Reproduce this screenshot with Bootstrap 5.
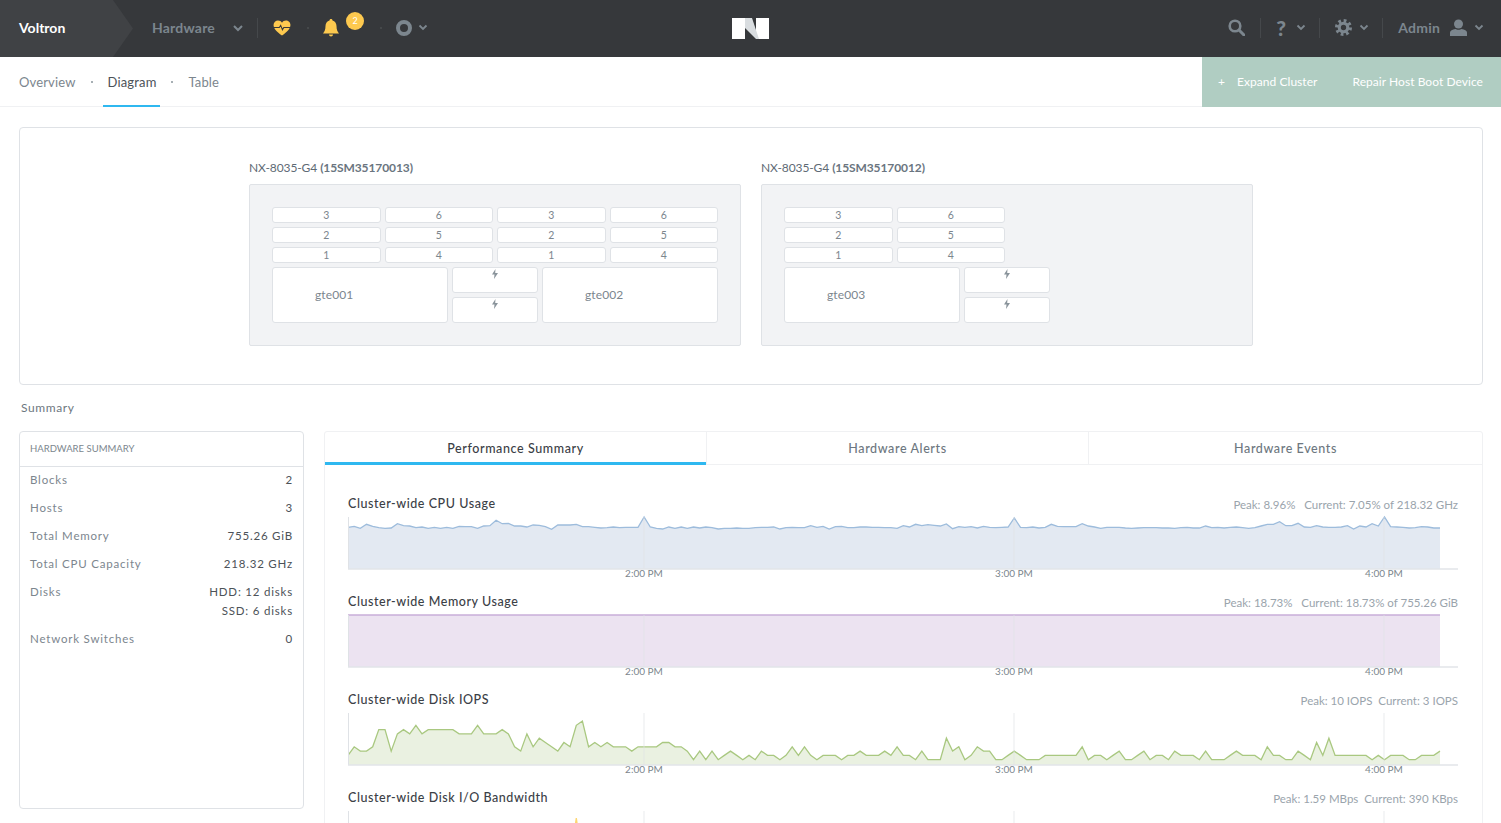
<!DOCTYPE html>
<html lang="en">
<head>
    <meta charset="UTF-8">
    <meta name="viewport" content="width=device-width, initial-scale=1.0">
    <title>Voltron Hardware</title>
    <link href="https://cdn.jsdelivr.net/npm/bootstrap@5.3.2/dist/css/bootstrap.min.css" rel="stylesheet">
    <style>
        html, body { height: 100%; overflow: hidden; }
        body { font-family: Lato, "Liberation Sans", sans-serif; color: #4c5258; background: #fff; }
        .top-hdr { height: 57px; padding-bottom: 2px; background: #36383b; display: grid; grid-template-columns: 1fr auto 1fr; align-items: center; }
        .brand-arrow { width: 133px; height: 57px; margin-bottom: -2px; background: #404245; clip-path: polygon(0 0, 113px 0, 133px 50%, 113px 100%, 0 100%); padding-left: 19px; line-height: 55px; color: #fff; font-size: 14px; font-weight: 700; }
        .hdr-txt { color: #7c868e; font-size: 14px; font-weight: 700; letter-spacing: .2px; }
        .hdr-sep { width: 1px; height: 20px; background: #45484b; }
        .hdr-dot { width: 2px; height: 2px; background: #4b4e51; border-radius: 50%; }
        .alert-dot { position: absolute; left: 23px; top: -7px; width: 18px; height: 18px; border-radius: 50%; background: #fdc94f; color: #fff; font-size: 9px; line-height: 18px; text-align: center; }
        .help-mark { color: #7c868e; font-size: 21px; font-weight: 900; line-height: 1; width: 10px; }
        .sub-nav { height: 50px; border-bottom: 1px solid #f0f1f3; }
        .sub-link { font-size: 13px; letter-spacing: .15px; color: #7c868e; height: 50px; line-height: 50px; position: relative; }
        .sub-link.on { color: #4c5258; }
        .sub-link.on::after { content: ""; position: absolute; left: -5px; right: -4px; bottom: 0; height: 2px; background: #2fb8f0; }
        .sub-dot { width: 2px; height: 2px; border-radius: 50%; background: #8a949b; margin: 0 15px; }
        .act-box { width: 299px; height: 50px; background: #b0cdc2; color: #fff; font-size: 12px; letter-spacing: .05px; line-height: 49px; white-space: nowrap; flex-shrink: 0; }
        .act-plus { margin-left: 16px; width: 19px; flex-shrink: 0; }
        .rack-card { margin: 20px 18px 0 19px; height: 258px; border: 1px solid #dfe2e6; border-radius: 4px; padding-top: 30px; gap: 20px; }
        .rack-title { font-size: 12px; letter-spacing: -.1px; color: #5e6a75; height: 26px; line-height: 19px; }
        .rack-title b { font-weight: 700; color: #6a7580; }
        .rack-box { width: 492px; height: 162px; background: #f2f3f5; border: 1px solid #dfe2e6; border-radius: 2px; padding: 22px; }
        .drive-grid { display: grid; grid-template-columns: repeat(4, 1fr); gap: 4px; }
        .drive-grid.half { grid-template-columns: repeat(2, 1fr); width: 221px; }
        .drive-slot, .host-slot, .psu-slot { background: #fff; border: 1px solid #dfe2e6; border-radius: 3px; color: #7c868e; }
        .drive-slot { height: 16px; font-size: 10.5px; line-height: 15px; text-align: center; }
        .host-slot { width: 176px; height: 56px; font-size: 12px; line-height: 53px; padding-left: 42px; letter-spacing: .1px; }
        .psu-slot { width: 86px; height: 26px; }
        .psu-slot svg { display: block; margin: 1px auto 0; }
        .sum-label { margin: 16px 0 0 21px; height: 30px; font-size: 12px; letter-spacing: .6px; color: #6d7780; line-height: 14px; }
        .sum-row { margin: 0 18px 0 19px; gap: 20px; }
        .hw-card { width: 285px; height: 378px; border: 1px solid #dfe2e6; border-radius: 4px; flex-shrink: 0; }
        .hw-head { height: 35px; border-bottom: 1px solid #dfe2e6; padding-left: 10px; font-size: 9.5px; color: #7c868e; line-height: 34px; }
        .hw-row { padding: 0 10px; height: 28px; line-height: 26px; font-size: 11.5px; letter-spacing: .8px; color: #7c868e; }
        .hw-row.tall { height: 47px; }
        .hw-row span:last-child { color: #4c5258; text-align: right; }
        .hw-row.tall span:last-child { line-height: 19px; padding-top: 3px; }
        .perf-panel { flex: 1; border: 1px solid #f0f1f3; border-radius: 3px; height: 500px; }
        .perf-tab { height: 33px; line-height: 33px; text-align: center; font-size: 12.5px; letter-spacing: .6px; color: #6d7780; border-bottom: 1px solid #f0f1f3; font-weight: 500; }
        .perf-tab + .perf-tab { border-left: 1px solid #f0f1f3; }
        .perf-tab.on { color: #3b4046; border-bottom: 3px solid #2fb8f0; }
        .chart-wrap { padding: 28px 24px 0 23px; }
        .chart-item { height: 98px; }
        .chart-head { height: 20px; }
        .chart-name { font-size: 12.5px; font-weight: 500; letter-spacing: .55px; color: #3b4046; line-height: 22px; }
        .chart-peak { font-size: 11.5px; color: #9aa4ac; line-height: 24px; }
        .chart-svg { display: block; width: 1110px; height: 68px; }
        .chart-svg text { font-family: Lato, "Liberation Sans", sans-serif; font-size: 10px; fill: #7c868e; text-anchor: middle; }
    </style>
</head>
<body>
    <div class="top-hdr">
        <div class="d-flex align-items-center">
            <div class="brand-arrow">Voltron</div>
            <span class="hdr-txt" style="margin-left:19px">Hardware</span>
            <svg style="margin:0 13px 0 17px" width="12" height="8" viewBox="0 0 12 8"><path d="M2 2l4 4 4-4" fill="none" stroke="#7c868e" stroke-width="2"/></svg>
            <div class="hdr-sep" style="margin-right:15px"></div>
            <svg width="18" height="16" viewBox="0 0 20 18"><path d="M10 17.500C4 13 .5 9.500.5 5.500.5 2.500 3 .5 5.500.5c2 0 3.500 1 4.500 2.500C11 1.500 12.500.5 14.500.5c2.500 0 5 2 5 5 0 4-3.500 7.500-9.500 12z" fill="#fdc94f"/><path d="M1 8.500h6l1.500-2.500 2 5 1.500-2.500h7" fill="none" stroke="#36383b" stroke-width="1.200"/></svg>
            <div class="hdr-dot" style="margin:0 14px 0 16px"></div>
            <div class="position-relative">
                <svg class="d-block" width="16" height="18" viewBox="0 0 16 18"><path d="M8 0c1 0 1.500.7 1.500 1.500C12 2.200 13.500 4.500 13.500 7c0 4 1 5.500 2.500 7.500H0C1.500 12.500 2.500 11 2.500 7c0-2.500 1.500-4.800 4-5.500C6.500.7 7 0 8 0zM6 15.500h4c0 1.200-1 2-2 2s-2-.8-2-2z" fill="#fdc94f"/></svg>
                <span class="alert-dot">2</span>
            </div>
            <div class="hdr-dot" style="margin:0 14px 0 41px"></div>
            <svg width="16" height="16" viewBox="0 0 16 16"><circle cx="8" cy="8" r="6" fill="none" stroke="#7c868e" stroke-width="4"/></svg>
            <svg style="margin-left:6px" width="10" height="7" viewBox="0 0 10 7"><path d="M1.500 1.500l3.500 3.500 3.500-3.500" fill="none" stroke="#7c868e" stroke-width="1.800"/></svg>
        </div>
        <svg width="37" height="22" viewBox="0 0 37 22"><path d="M0 1h13v21H0zM24 1h13v21H24z" fill="#fff"/><path d="M13 1h7l7 21h-3L13 11z" fill="#d9dde0"/></svg>
        <div class="d-flex align-items-center justify-content-end">
            <svg width="17" height="17" viewBox="0 0 17 17"><circle cx="7" cy="7" r="5.300" fill="none" stroke="#7c868e" stroke-width="2.600"/><path d="M11 11l5 5" stroke="#7c868e" stroke-width="3" stroke-linecap="round"/></svg>
            <div class="hdr-sep" style="margin:0 15px"></div>
            <span class="help-mark">?</span>
            <svg style="margin-left:10px" width="10" height="7" viewBox="0 0 10 7"><path d="M1.500 1.500l3.500 3.500 3.500-3.500" fill="none" stroke="#7c868e" stroke-width="1.800"/></svg>
            <div class="hdr-sep" style="margin:0 15px 0 13px"></div>
            <svg width="17" height="17" viewBox="0 0 16 16"><circle cx="8" cy="8" r="6.500" fill="none" stroke="#7c868e" stroke-width="3" stroke-dasharray="2.550 2.550"/><circle cx="8" cy="8" r="4" fill="none" stroke="#7c868e" stroke-width="3"/></svg>
            <svg style="margin-left:7px" width="10" height="7" viewBox="0 0 10 7"><path d="M1.500 1.500l3.500 3.500 3.500-3.500" fill="none" stroke="#7c868e" stroke-width="1.800"/></svg>
            <div class="hdr-sep" style="margin:0 15px 0 13px"></div>
            <span class="hdr-txt">Admin</span>
            <svg style="margin-left:10px" width="17" height="17" viewBox="0 0 17 17"><circle cx="8.500" cy="5" r="4.500" fill="#7c868e"/><path d="M0 17v-3.500c0-2 2.500-3 5.500-3.500 1 1 5 1 6 0 3 .5 5.500 1.500 5.500 3.500V17z" fill="#7c868e"/></svg>
            <svg style="margin:0 17px 0 7px" width="10" height="7" viewBox="0 0 10 7"><path d="M1.500 1.500l3.500 3.500 3.500-3.500" fill="none" stroke="#7c868e" stroke-width="1.800"/></svg>
        </div>
    </div>

    <div class="sub-nav d-flex align-items-center justify-content-between">
        <div class="d-flex align-items-center" style="padding-left:19px">
            <span class="sub-link">Overview</span>
            <span class="sub-dot"></span>
            <span class="sub-link on">Diagram</span>
            <span class="sub-dot"></span>
            <span class="sub-link">Table</span>
        </div>
        <div class="act-box d-flex">
            <span class="act-plus">+</span>
            <span>Expand Cluster</span>
            <span class="ms-auto" style="margin-right:18px">Repair Host Boot Device</span>
        </div>
    </div>

    <div class="rack-card d-flex justify-content-center">
        <div>
            <div class="rack-title">NX-8035-G4 <b>(15SM35170013)</b></div>
            <div class="rack-box">
                <div class="drive-grid">
                    <div class="drive-slot">3</div><div class="drive-slot">6</div><div class="drive-slot">3</div><div class="drive-slot">6</div>
                    <div class="drive-slot">2</div><div class="drive-slot">5</div><div class="drive-slot">2</div><div class="drive-slot">5</div>
                    <div class="drive-slot">1</div><div class="drive-slot">4</div><div class="drive-slot">1</div><div class="drive-slot">4</div>
                </div>
                <div class="d-flex gap-1 mt-1">
                    <div class="host-slot">gte001</div>
                    <div class="d-flex flex-column gap-1">
                        <div class="psu-slot"><svg width="6" height="10" viewBox="0 0 6 10"><path d="M3.500 0L0 5.500h2.500L2 10l4-6H3.200z" fill="#8a949b"/></svg></div>
                        <div class="psu-slot"><svg width="6" height="10" viewBox="0 0 6 10"><path d="M3.500 0L0 5.500h2.500L2 10l4-6H3.200z" fill="#8a949b"/></svg></div>
                    </div>
                    <div class="host-slot">gte002</div>
                </div>
            </div>
        </div>
        <div>
            <div class="rack-title">NX-8035-G4 <b>(15SM35170012)</b></div>
            <div class="rack-box">
                <div class="drive-grid half">
                    <div class="drive-slot">3</div><div class="drive-slot">6</div>
                    <div class="drive-slot">2</div><div class="drive-slot">5</div>
                    <div class="drive-slot">1</div><div class="drive-slot">4</div>
                </div>
                <div class="d-flex gap-1 mt-1">
                    <div class="host-slot">gte003</div>
                    <div class="d-flex flex-column gap-1">
                        <div class="psu-slot"><svg width="6" height="10" viewBox="0 0 6 10"><path d="M3.500 0L0 5.500h2.500L2 10l4-6H3.200z" fill="#8a949b"/></svg></div>
                        <div class="psu-slot"><svg width="6" height="10" viewBox="0 0 6 10"><path d="M3.500 0L0 5.500h2.500L2 10l4-6H3.200z" fill="#8a949b"/></svg></div>
                    </div>
                </div>
            </div>
        </div>
    </div>

    <div class="sum-label">Summary</div>
    <div class="sum-row d-flex align-items-start">
        <div class="hw-card">
            <div class="hw-head">HARDWARE SUMMARY</div>
            <div class="hw-row d-flex justify-content-between"><span>Blocks</span><span>2</span></div>
            <div class="hw-row d-flex justify-content-between"><span>Hosts</span><span>3</span></div>
            <div class="hw-row d-flex justify-content-between"><span>Total Memory</span><span>755.26 GiB</span></div>
            <div class="hw-row d-flex justify-content-between"><span>Total CPU Capacity</span><span>218.32 GHz</span></div>
            <div class="hw-row tall d-flex justify-content-between"><span>Disks</span><span>HDD: 12 disks<br>SSD: 6 disks</span></div>
            <div class="hw-row d-flex justify-content-between"><span>Network Switches</span><span>0</span></div>
        </div>
        <div class="perf-panel">
            <div class="d-flex">
                <div class="perf-tab on" style="width:381px">Performance Summary</div>
                <div class="perf-tab" style="width:382px">Hardware Alerts</div>
                <div class="perf-tab flex-grow-1">Hardware Events</div>
            </div>
            <div class="chart-wrap" id="charts"></div>
        </div>
    </div>

    <script src="https://cdn.jsdelivr.net/npm/bootstrap@5.3.2/dist/js/bootstrap.bundle.min.js"></script>
    <script>
        const STEP = 1092 / 177;

        // read off the reference, one sample per index, in y offsets of the chart box
        const cpuRaw = [97,94,100,88,94,98,100,99,86,92,93,98,96,100,97,100,97,100,94,95,95,100,93,92,76,86,85,93,93,96,90,91,95,103,90,90,90,88,95,95,97,99,98,96,98,97,97,97,
            66,
            96,100,102,96,100,96,100,96,99,96,98,102,100,100,99,100,100,98,97,97,96,102,98,97,98,98,92,97,94,102,95,94,98,98,96,96,97,97,98,98,100,92,96,88,92,89,91,93,87,101,95,97,95,99,94,97,98,97,96,
            69,
            97,98,96,99,97,88,94,95,95,95,86,93,96,100,97,97,97,99,100,99,98,98,98,99,99,100,98,97,99,99,93,98,97,99,97,96,98,100,98,93,88,88,80,92,92,85,96,97,92,96,97,97,96,92,102,93,96,86,93,
            66,
            95,96,97,99,98,95,96,99,99];
        const iops = [2,4,3,3,4,8,8,3,7,8,7,9,7,8,8,8,8,8,7,7,7,9,7,7,7,8,7,4,3,7,4,6,5,4,3,5,4,9,10,4,5,4,5,4,4,4,3,4,4,
            4,4,5,5,4,4,3,1,3,1,3,1,2,3,2,
            1,2,1,3,2,2,1,2,4,2,4,2,1,2,2,2,1,2,2,3,2,2,2,3,2,4,2,2,1,3,1,1,1,6,3,4,1,2,4,3,3,1,1,2,3,
            2,1,1,1,2,2,2,2,2,2,4,1,2,2,1,2,3,
            1,1,2,3,1,2,2,1,3,2,2,2,1,3,1,1,1,2,3,2,2,2,1,4,2,2,1,1,3,2,1,5,2,6,2,2,2,2,2,2,1,2,1,2,2,2,1,1,2,2,2,3];

        const charts = [
            { name: 'Cluster-wide CPU Usage', peak: 'Peak: 8.96% &nbsp; Current: 7.05% of 218.32 GHz', line: '#9dbcdc', fill: '#e3e9f2', ys: cpuRaw.map(v => v / 3 - 18), labels: true },
            { name: 'Cluster-wide Memory Usage', peak: 'Peak: 18.73% &nbsp; Current: 18.73% of 755.26 GiB', line: '#c9aed8', fill: '#ece3f1', ys: iops.map(() => 4), labels: true },
            { name: 'Cluster-wide Disk IOPS', peak: 'Peak: 10 IOPS &nbsp;Current: 3 IOPS', line: '#a9c880', fill: '#eaf1e1', ys: iops.map(v => 55 - 4.3 * v), labels: true },
            { name: 'Cluster-wide Disk I/O Bandwidth', peak: 'Peak: 1.59 MBps &nbsp;Current: 390 KBps', line: '#fdd772', fill: '#fdf6e0', ys: iops.map((v, i) => i === 37 ? 11 : 54), labels: false }
        ];

        function chartSvg(c) {
            const pts = c.ys.map((y, i) => `${(i * STEP).toFixed(1)},${y.toFixed(1)}`).join(' ');
            const lastX = ((c.ys.length - 1) * STEP).toFixed(1);
            const ticks = [[296, '2:00 PM'], [666, '3:00 PM'], [1036, '4:00 PM']].map(([x, t]) =>
                `<line x1="${x}" x2="${x}" y1="4" y2="56" stroke="#dfe2e6" stroke-opacity=".7"/>` + (c.labels ? `<text x="${x}" y="64">${t}</text>` : '')).join('');
            return `<svg class="chart-svg" viewBox="0 0 1110 68">
                <polygon points="0,56 ${pts} ${lastX},56" fill="${c.fill}"/>
                <polyline points="${pts}" fill="none" stroke="${c.line}" stroke-width="1.300"/>
                ${ticks}
                <line x1=".5" x2=".5" y1="4" y2="56" stroke="#dfe2e6"/>
                <line x1="0" x2="1110" y1="56" y2="56" stroke="#e2e4e8" stroke-width="1.500"/>
            </svg>`;
        }

        document.getElementById('charts').innerHTML = charts.map(c => `
            <div class="chart-item">
                <div class="chart-head d-flex justify-content-between">
                    <span class="chart-name">${c.name}</span>
                    <span class="chart-peak">${c.peak}</span>
                </div>
                ${chartSvg(c)}
            </div>`).join('');
    </script>
</body>
</html>
